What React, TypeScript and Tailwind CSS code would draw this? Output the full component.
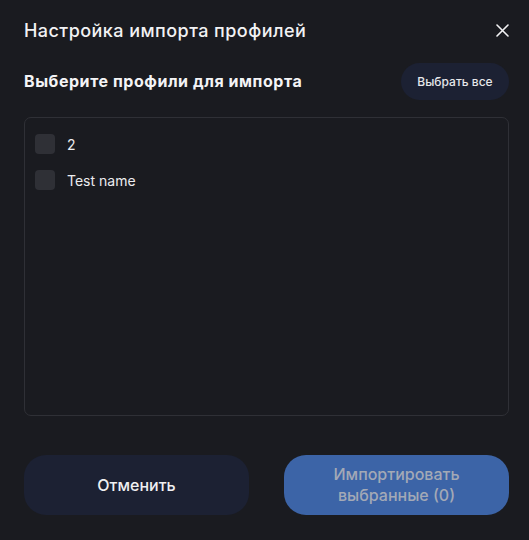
import React from "react";

export default function App() {
  const items = ["2", "Test name"];
  return (
    <div
      className="w-[529px] h-[540px] bg-[#1a1b20] flex flex-col pl-6 pr-[20px] pt-[18px] pb-[25px] text-white"
      style={{ fontFamily: "Inter, 'Noto Sans', sans-serif" }}
    >
      <div className="flex items-center justify-between h-[24px]">
        <h1 className="text-[18px] font-medium tracking-[0.45px] text-[#f2f2f4]">Настройка импорта профилей</h1>
        <button className="w-[14px] h-[14px] flex items-center justify-center">
          <svg width="13" height="13" viewBox="0 0 13 13" fill="none" stroke="#f2f2f4" strokeWidth="1.6" strokeLinecap="round">
            <path d="M1 1L12 12M12 1L1 12" />
          </svg>
        </button>
      </div>
      <div className="flex items-center justify-between mt-[21px]">
        <h2 className="text-[16px] font-bold tracking-[0.55px] text-[#f4f4f6] -mt-[2px]">Выберите профили для импорта</h2>
        <button className="h-[37px] w-[108px] rounded-full bg-[#1c2133] text-[12px] font-medium text-[#e6e7ea]">
          Выбрать все
        </button>
      </div>
      <div className="mt-[17px] h-[299px] rounded-[7px] border border-[#2f3036] px-[10px] pt-[16px] flex flex-col gap-[16px]">
        {items.map((t) => (
          <label key={t} className="flex items-center gap-[12px] h-[20px]">
            <span className="w-[20px] h-[20px] rounded-[4px] bg-[#2f3036] block" />
            <span className="text-[14px] text-[#ececef]">{t}</span>
          </label>
        ))}
      </div>
      <div className="mt-auto flex justify-between">
        <button className="w-[225px] h-[60px] rounded-[22px] bg-[#1c2133] text-[16px] font-medium text-[#f0f0f2]">
          Отменить
        </button>
        <button className="w-[225px] h-[60px] rounded-[22px] bg-[#3c64a7] text-[16px] font-medium leading-[21px] text-[#a3a9b6]">
          Импортировать
          <br />
          выбранные (0)
        </button>
      </div>
    </div>
  );
}
